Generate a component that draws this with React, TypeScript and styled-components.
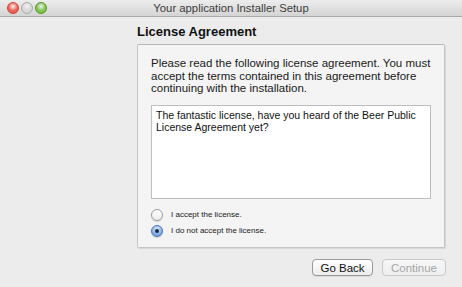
import React, { useState } from 'react';
import styled, { createGlobalStyle } from 'styled-components';

const GlobalStyle = createGlobalStyle`
  html, body {
    margin: 0;
    padding: 0;
    background: #ececec;
  }
  * {
    box-sizing: border-box;
  }
`;

const Window = styled.div`
  width: 462px;
  height: 287px;
  display: flex;
  flex-direction: column;
  background: #ececec;
  font-family: "Liberation Sans", Arial, sans-serif;
  color: #1a1a1a;
  overflow: hidden;
`;

const TitleBar = styled.div`
  position: relative;
  height: 17px;
  flex-shrink: 0;
  display: flex;
  align-items: center;
  justify-content: center;
  background: linear-gradient(#ececec, #d4d4d4);
  border-bottom: 1px solid #a9a9a9;
`;

const Lights = styled.div`
  position: absolute;
  left: 7px;
  top: 2px;
  display: flex;
  gap: 2px;
`;

const Light = styled.span<{ $c: string; $b: string }>`
  width: 12px;
  height: 12px;
  border-radius: 50%;
  background: radial-gradient(circle at 50% 35%, #fff8 0, ${p => p.$c} 55%);
  border: 1px solid ${p => p.$b};
`;

const Title = styled.span`
  font-size: 11.3px;
  color: #3c3c3c;
`;

const Body = styled.div`
  flex: 1;
  display: flex;
  padding-left: 137px;
  padding-right: 16px;
`;

const Content = styled.div`
  flex: 1;
  display: flex;
  flex-direction: column;
`;

const Heading = styled.h1`
  margin: 0;
  height: 27px;
  padding-top: 7px;
  font-size: 13px;
  font-weight: bold;
  color: #111;
`;

const Panel = styled.div`
  height: 204px;
  margin-right: 1px;
  background: #f4f4f4;
  border: 1px solid #c4c4c4;
  border-top-color: #b8b8b8;
  border-radius: 2px;
  box-shadow: 1px 1px 0 #d8d8d8;
  padding: 12px 13px 0;
  display: flex;
  flex-direction: column;
`;

const Intro = styled.p`
  margin: 0;
  font-size: 11.5px;
  line-height: 12.5px;
  color: #1a1a1a;
`;

const LicenseBox = styled.div`
  margin-top: 10px;
  height: 94px;
  background: #fff;
  border: 1px solid #bdbdbd;
  padding: 3px 4px;
  font-size: 10.5px;
  line-height: 12.5px;
  color: #111;
`;

const Options = styled.div`
  margin-top: 10px;
  display: flex;
  flex-direction: column;
  gap: 4px;
`;

const Option = styled.label`
  display: flex;
  align-items: center;
  gap: 8px;
  height: 12px;
  font-size: 8px;
  color: #1a1a1a;
  cursor: pointer;
`;

const Radio = styled.span<{ $on: boolean }>`
  width: 12px;
  height: 12px;
  border-radius: 50%;
  display: flex;
  align-items: center;
  justify-content: center;
  border: 1px solid ${p => (p.$on ? '#4a74b0' : '#9c9c9c')};
  background: ${p =>
    p.$on
      ? 'radial-gradient(circle at 50% 30%, #dbe9fb 0, #8db4e8 55%, #5b8fd6 100%)'
      : 'linear-gradient(#ffffff, #ececec)'};
  box-shadow: 0 1px 1px rgba(0, 0, 0, 0.15);

  &::after {
    content: '';
    display: ${p => (p.$on ? 'block' : 'none')};
    width: 4px;
    height: 4px;
    border-radius: 50%;
    background: #1b2a3c;
  }
`;

const Footer = styled.div`
  display: flex;
  justify-content: flex-end;
  gap: 9px;
  padding-top: 11px;
`;

const Button = styled.button<{ $w: number }>`
  width: ${p => p.$w}px;
  height: 17px;
  padding: 0;
  font-family: "Liberation Sans", Arial, sans-serif;
  font-size: 11.5px;
  border-radius: 4px;
  border: 1px solid #9a9a9a;
  background: linear-gradient(#ffffff, #ececec);
  color: #111;
  box-shadow: 0 1px 0 rgba(0, 0, 0, 0.08);

  &:disabled {
    border-color: #c9c9c9;
    background: linear-gradient(#f7f7f7, #eeeeee);
    color: #a6a6a6;
    box-shadow: none;
  }
`;

export default function App() {
  const [accepted, setAccepted] = useState(false);

  return (
    <Window>
      <GlobalStyle />
      <TitleBar>
        <Lights>
          <Light $c="#ec5f55" $b="#c5443b" />
          <Light $c="#d6d6d6" $b="#a9a9a9" />
          <Light $c="#7fc34a" $b="#54962c" />
        </Lights>
        <Title>Your application Installer Setup</Title>
      </TitleBar>
      <Body>
        <Content>
          <Heading>License Agreement</Heading>
          <Panel>
            <Intro>
              Please read the following license agreement. You must accept the terms
              contained in this agreement before continuing with the installation.
            </Intro>
            <LicenseBox>
              The fantastic license, have you heard of the Beer Public License
              Agreement yet?
            </LicenseBox>
            <Options>
              <Option onClick={() => setAccepted(true)}>
                <Radio $on={accepted} />
                I accept the license.
              </Option>
              <Option onClick={() => setAccepted(false)}>
                <Radio $on={!accepted} />
                I do not accept the license.
              </Option>
            </Options>
          </Panel>
          <Footer>
            <Button $w={61}>Go Back</Button>
            <Button $w={64} disabled={!accepted}>
              Continue
            </Button>
          </Footer>
        </Content>
      </Body>
    </Window>
  );
}
